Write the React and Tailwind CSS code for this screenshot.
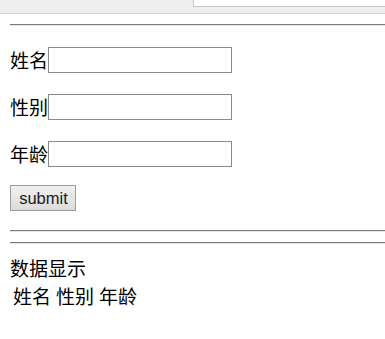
import React from "react";

const cjk = { fontFamily: '"Noto Sans CJK SC", "Noto Sans", sans-serif' };

function Field({ label }) {
  return (
    <div className="flex items-center h-[26px]">
      <span className="text-[19px] leading-[26px] text-black" style={cjk}>{label}</span>
      <input type="text" className="w-[184px] h-[26px] border border-[#8a8a8a] bg-white outline-none" />
    </div>
  );
}

function Hr() {
  return <div className="h-[2px] border-t border-t-[#7a7a7a] border-b border-b-[#e6e6e6] w-full" />;
}

export default function App() {
  return (
    <div className="w-[385px] h-[339px] bg-white overflow-hidden">
      <div className="h-[14px] bg-[#eeeeee] border-b border-[#d6d6d6] flex">
        <div className="w-[193px]" />
        <div className="flex-1 h-[7px] bg-white border-l border-b border-[#c8c8c8]" />
      </div>
      <div className="pl-[10px]">
        <div className="mt-[10px]"><Hr /></div>
        <div className="mt-[21px] flex flex-col gap-[21px]">
          <Field label="姓名" />
          <Field label="性别" />
          <Field label="年龄" />
        </div>
        <button
          className="mt-[18px] h-[26px] w-[66px] pl-[1px] flex items-center justify-center border border-[#9c9c9c] bg-[#e4e4e4] text-[16.5px] text-[#1a1a1a]"
          style={{ fontFamily: '"Liberation Sans", Arial, sans-serif', background: "linear-gradient(#f0f0f0, #dcdcdc)" }}
        >
          submit
        </button>
        <div className="mt-[19px]"><Hr /></div>
        <div className="mt-[10px]"><Hr /></div>
        <div className="mt-[11px] text-[19px] leading-[26px] text-black" style={cjk}>数据显示</div>
        <div className="mt-[3px] pl-[3px] flex gap-[5px] text-[19px] leading-[24px] text-black" style={cjk}>
          <span>姓名</span>
          <span>性别</span>
          <span>年龄</span>
        </div>
      </div>
    </div>
  );
}
